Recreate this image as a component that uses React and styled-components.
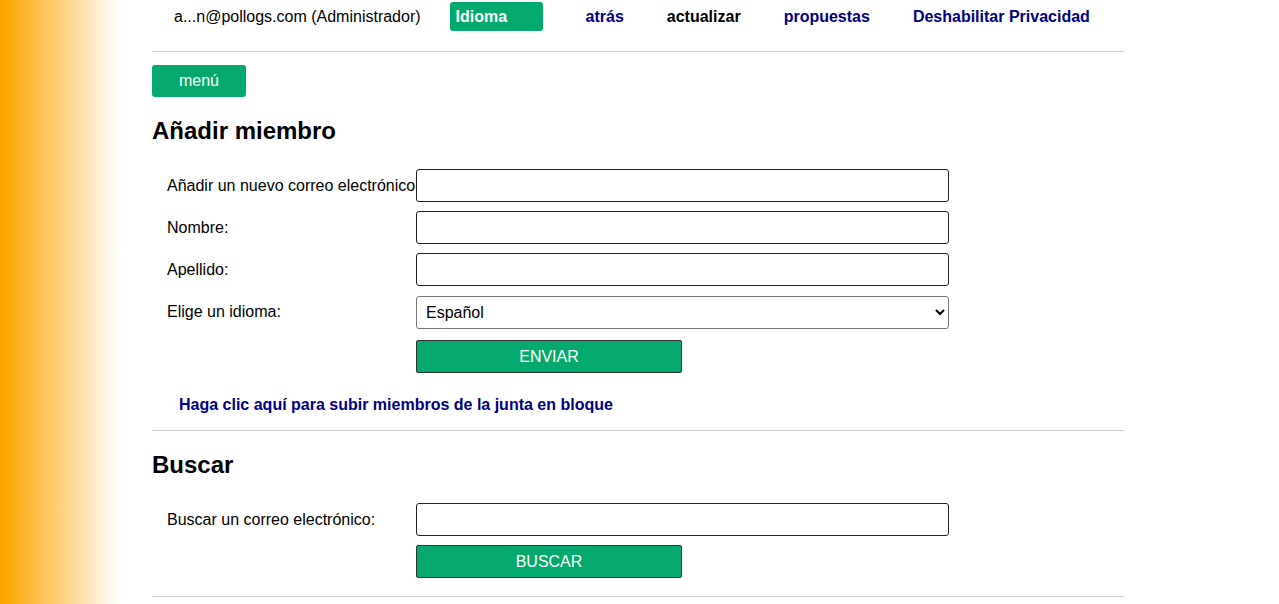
import React from 'react';
import styled, { createGlobalStyle } from 'styled-components';

const GlobalStyle = createGlobalStyle`
  html, body {
    margin: 0;
    padding: 0;
  }
  body {
    font-family: "Liberation Sans", Arial, sans-serif;
    font-size: 16px;
    color: #000;
    min-height: 604px;
    background: linear-gradient(to right, #FFA500 4px, #fff 120px) no-repeat;
    background-attachment: fixed;
  }
`;

const green = '#04AA6D';
const navy = '#000080';

const Page = styled.div`
  margin-left: 152px;
  width: 972px;
`;

const TopBar = styled.nav`
  display: flex;
  align-items: center;
  height: 29px;
  padding: 2px 0 0 22px;
`;

const User = styled.span`
  margin-right: 29px;
`;

const LangButton = styled.button`
  width: 93px;
  height: 29px;
  background: ${green};
  color: #fff;
  border: none;
  border-radius: 3px;
  padding: 0 6px;
  text-align: left;
  font: bold 16px "Liberation Sans", Arial, sans-serif;
`;

const Links = styled.div`
  display: flex;
  gap: 43px;
  margin-left: 43px;
`;

const NavLink = styled.a`
  font-weight: bold;
  color: ${(p) => (p.$plain ? '#000' : navy)};
  text-decoration: none;
`;

const Rule = styled.hr`
  border: none;
  border-top: 1px solid #ccc;
  margin: ${(p) => p.$margin || '0'};
  height: 0;
`;

const MenuButton = styled.button`
  display: block;
  width: 94px;
  height: 32px;
  background: ${green};
  color: #fff;
  border: none;
  border-radius: 3px;
  font: 16px "Liberation Sans", Arial, sans-serif;
`;

const Heading = styled.h2`
  font-size: 24px;
  line-height: 28px;
  margin: ${(p) => p.$margin || '0'};
`;

const Form = styled.form`
  display: grid;
  grid-template-columns: 249px 533px;
  row-gap: 9px;
  padding-left: 15px;
  align-items: center;
`;

const Label = styled.label`
  white-space: nowrap;
`;

const TextInput = styled.input`
  box-sizing: border-box;
  width: 533px;
  height: 33px;
  border: 1px solid #222;
  border-radius: 3px;
  padding: 0 8px;
  font: 16px "Liberation Sans", Arial, sans-serif;
`;

const Select = styled.select`
  box-sizing: border-box;
  width: 533px;
  height: 33px;
  margin-top: 1px;
  border: 1px solid #767676;
  border-radius: 3px;
  padding: 0 5px;
  background: #fff;
  color: #000;
  font: 16px "Liberation Sans", Arial, sans-serif;
`;

const Submit = styled.button`
  grid-column: 2;
  box-sizing: border-box;
  width: 266px;
  height: 33px;
  margin-top: ${(p) => p.$top || '0'};
  background: ${green};
  color: #fff;
  border: 1px solid #333;
  border-radius: 2px;
  font: 16px "Liberation Sans", Arial, sans-serif;
`;

const BulkLink = styled.a`
  display: block;
  margin: 23px 0 0 27px;
  line-height: 18px;
  font-weight: bold;
  color: ${navy};
  text-decoration: none;
`;

const App = () => (
  <>
    <GlobalStyle />
    <Page>
      <TopBar>
        <User>a...n@pollogs.com (Administrador)</User>
        <LangButton>Idioma</LangButton>
        <Links>
          <NavLink href="#">atrás</NavLink>
          <NavLink href="#" $plain>actualizar</NavLink>
          <NavLink href="#">propuestas</NavLink>
          <NavLink href="#">Deshabilitar Privacidad</NavLink>
        </Links>
      </TopBar>
      <Rule $margin="20px 0 13px" />
      <MenuButton>menú</MenuButton>
      <Heading $margin="20px 0 24px">Añadir miembro</Heading>
      <Form onSubmit={(e) => e.preventDefault()}>
        <Label>Añadir un nuevo correo electrónico</Label>
        <TextInput type="text" />
        <Label>Nombre:</Label>
        <TextInput type="text" />
        <Label>Apellido:</Label>
        <TextInput type="text" />
        <Label>Elige un idioma:</Label>
        <Select defaultValue="es">
          <option value="es">Español</option>
          <option value="en">English</option>
        </Select>
        <Submit $top="2px">ENVIAR</Submit>
      </Form>
      <BulkLink href="#">Haga clic aquí para subir miembros de la junta en bloque</BulkLink>
      <Rule $margin="16px 0 20px" />
      <Heading $margin="0 0 24px">Buscar</Heading>
      <Form onSubmit={(e) => e.preventDefault()}>
        <Label>Buscar un correo electrónico:</Label>
        <TextInput type="text" />
        <Submit>BUSCAR</Submit>
      </Form>
      <Rule $margin="18px 0 0" />
    </Page>
  </>
);

export default App;
